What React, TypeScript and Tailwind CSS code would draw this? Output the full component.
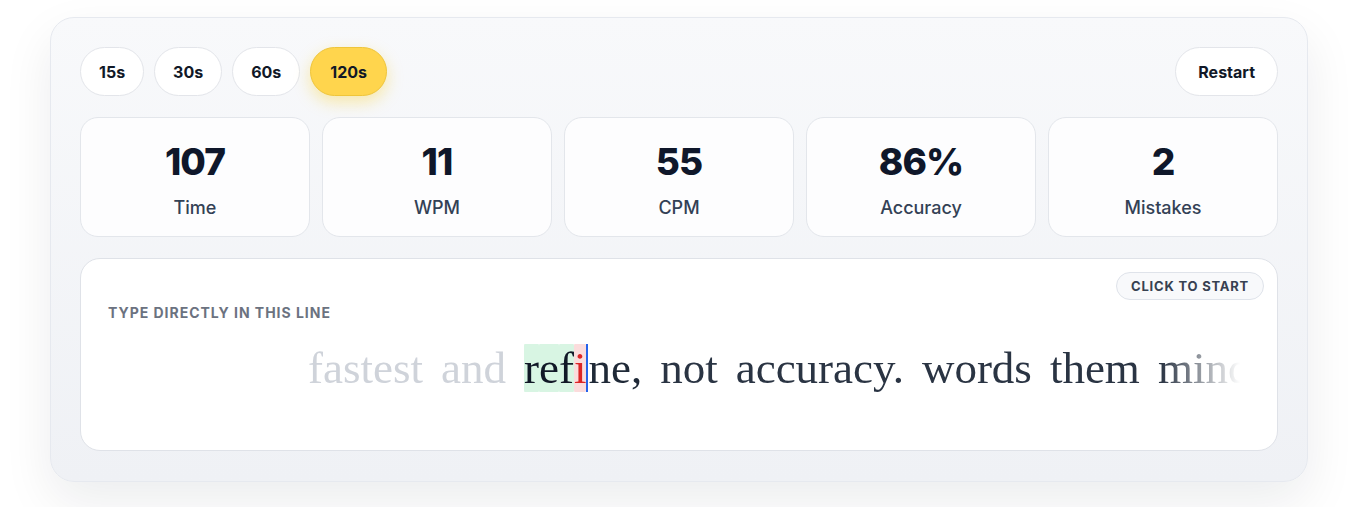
import React from 'react';

const durations = ['15s', '30s', '60s', '120s'];
const active = '120s';

const stats = [
  { value: '107', label: 'Time' },
  { value: '11', label: 'WPM' },
  { value: '55', label: 'CPM' },
  { value: '86%', label: 'Accuracy' },
  { value: '2', label: 'Mistakes' },
];

const doneWords = ['fastest', 'and'];
const restWords = ['not', 'accuracy.', 'words', 'them', 'mind'];

export default function App() {
  return (
    <div className="min-h-screen bg-white pl-[50px] pt-[17px]" style={{ fontFamily: 'Inter, "Open Sans", sans-serif' }}>
      <div className="w-[1258px] rounded-[24px] border border-[#e6e9ef] bg-gradient-to-b from-[#f8f9fb] to-[#eff1f5] p-[29px] pb-[30px] shadow-[0_20px_50px_rgba(15,23,42,0.08)]">
        {/* duration + restart */}
        <div className="flex items-center justify-between">
          <div className="flex gap-[10px]">
            {durations.map((d) => (
              <button
                key={d}
                className={
                  d === active
                    ? 'h-[49px] rounded-full border border-[#efc53a] bg-[#ffd54d] px-[19px] text-[16px] font-bold text-[#111827] shadow-[0_6px_16px_rgba(250,204,21,0.35)]'
                    : 'h-[49px] rounded-full border border-[#e3e5ea] bg-white px-[18px] text-[16px] font-bold text-[#111827]'
                }
              >
                {d}
              </button>
            ))}
          </div>
          <button className="h-[49px] rounded-full border border-[#e3e5ea] bg-white px-[22px] text-[16px] font-bold text-[#111827]">Restart</button>
        </div>

        {/* stats */}
        <div className="mt-[21px] grid grid-cols-5 gap-[12px]">
          {stats.map((s) => (
            <div key={s.label} className="flex h-[120px] flex-col items-center rounded-[18px] border border-[#e3e6eb] bg-[#fdfdfe] pt-[22px]">
              <div className="text-[37px] font-extrabold leading-[44px] tracking-tight text-[#0f172a]">{s.value}</div>
              <div className="mt-[12px] text-[18px] font-medium leading-[24px] text-[#334155]">{s.label}</div>
            </div>
          ))}
        </div>

        {/* typing area */}
        <div className="relative mt-[21px] rounded-[20px] border border-[#dfe2e8] bg-white px-[27px] pb-[58px] pt-[46px]">
          <span className="absolute right-[13px] top-[13px] rounded-full border border-[#dfe3ea] bg-[#f8f9fb] px-[14px] py-[5px] text-[13px] font-bold uppercase leading-[16px] tracking-[0.06em] text-[#374151]">
            Click to start
          </span>
          <div className="text-[14px] font-bold uppercase leading-[16px] tracking-[0.07em] text-[#6b7280]">Type directly in this line</div>
          <div
            className="mt-[23px] mr-[10px] overflow-hidden whitespace-nowrap pl-[200px] text-[45px] leading-[48px]"
            style={{
              fontFamily: '"Liberation Serif", Georgia, serif',
              maskImage: 'linear-gradient(to right, #000 0, #000 93%, transparent 100%)',
              WebkitMaskImage: 'linear-gradient(to right, #000 0, #000 93%, transparent 100%)',
            }}
          >
            {doneWords.map((w) => (
              <span key={w} className="mr-[18px] inline-block text-[#cfd3da]">{w}</span>
            ))}
            <span className="mr-[18px] inline-block">
              {['r', 'e', 'f'].map((c, i) => (
                <span key={i} className="rounded-[3px] bg-[#d8f5e3] text-[#111827]">{c}</span>
              ))}
              <span className="rounded-[3px] bg-[#fbdcdc] text-[#dc2626]">i</span>
              <span className="inline-block h-[48px] w-[2px] bg-[#2563eb] align-top" />
              <span className="text-[#1f2937]">ne,</span>
            </span>
            {restWords.map((w, i) => (
              <span key={i} className="mr-[18px] inline-block text-[#2a3443]">{w}</span>
            ))}
          </div>
        </div>
      </div>
    </div>
  );
}
